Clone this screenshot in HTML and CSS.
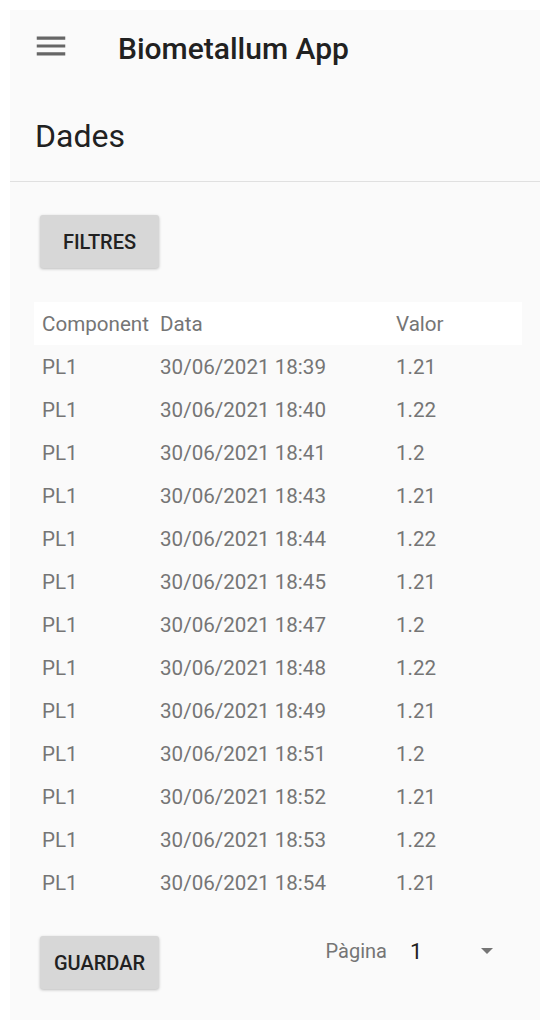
FILE: index.html
```html
<!DOCTYPE html>
<html lang="ca">
<head>
    <meta charset="UTF-8" />
    <meta name="viewport" content="width=device-width, initial-scale=1" />
    <title>Biometallum App</title>
    <link rel="stylesheet" href="styles.css">
</head>
<body>

    <div id="app">
        <header class="app-bar">
            <svg class="menu-icon" viewBox="0 0 24 24" width="38" height="38">
                <path d="M3 18h18v-2H3v2zm0-5h18v-2H3v2zm0-7v2h18V6H3z" fill="#666" />
            </svg>
            <span class="app-title">Biometallum App</span>
        </header>

        <h1 class="page-title">Dades</h1>

        <div class="content">
            <button class="grey-button">FILTRES</button>

            <table id="data-table">
                <thead>
                    <tr>
                        <th>Component</th>
                        <th>Data</th>
                        <th>Valor</th>
                    </tr>
                </thead>
                <tbody>
                    <!-- rows are filled in below -->
                </tbody>
            </table>

            <div class="footer">
                <button class="grey-button">GUARDAR</button>
                <div class="pagination">
                    <span class="page-label">Pàgina</span>
                    <div class="page-select">
                        <span class="page-value">1</span>
                        <span class="arrow"></span>
                    </div>
                </div>
            </div>
        </div>
    </div>

    <script>
        const readings = [
            ['18:39', '1.21'], ['18:40', '1.22'], ['18:41', '1.2'],
            ['18:43', '1.21'], ['18:44', '1.22'], ['18:45', '1.21'],
            ['18:47', '1.2'], ['18:48', '1.22'], ['18:49', '1.21'],
            ['18:51', '1.2'], ['18:52', '1.21'], ['18:53', '1.22'],
            ['18:54', '1.21']
        ];

        const tableBody = document.getElementById('data-table').querySelector('tbody');
        readings.forEach(([time, value]) => {
            const row = tableBody.insertRow();
            row.insertCell().textContent = 'PL1';
            row.insertCell().textContent = `30/06/2021 ${time}`;
            row.insertCell().textContent = value;
        });
    </script>

</body>
</html>
```

FILE: styles.css
```css
body {
    margin: 10px;
    background-color: #fff;
    font-family: Roboto, "Noto Sans", sans-serif;
}
#app {
    box-sizing: border-box;
    height: 1010px;
    background-color: #fafafa;
}
.app-bar {
    display: flex;
    align-items: center;
    height: 78px;
    padding-left: 22px;
}
.menu-icon {
    margin-bottom: 6px;
    margin-right: 48px;
}
.app-title {
    font-size: 30px;
    line-height: 36px;
    font-weight: 500;
    color: #212121;
}
.page-title {
    margin: 0;
    padding: 28px 0 25px 25px;
    font-size: 32px;
    line-height: 40px;
    font-weight: 400;
    color: #212121;
    border-bottom: 1px solid #e0e0e0;
}
.content {
    padding: 33px 18px 0 24px;
}
.grey-button {
    display: block;
    width: 119px;
    height: 53px;
    margin-left: 6px;
    padding: 0;
    border: none;
    border-radius: 3px;
    background-color: #d7d7d7;
    box-shadow: 0 1px 3px rgba(0,0,0,0.25);
    font-family: inherit;
    font-size: 20px;
    font-weight: 500;
    color: #212121;
}
table {
    width: 100%;
    border-collapse: collapse;
    margin-top: 34px;
}
th, td {
    height: 43px;
    padding: 0 0 0 8px;
    text-align: left;
    font-size: 20.6px;
    font-weight: 400;
    color: #757575;
}
thead tr {
    background-color: #fff;
}
th:first-child {
    width: 110px;
}
th:nth-child(2) {
    width: 228px;
}
.footer {
    display: flex;
    justify-content: space-between;
    align-items: flex-start;
    margin-top: 32px;
}
.pagination {
    display: flex;
    align-items: center;
    margin-right: 29px;
    height: 30px;
}
.page-label {
    font-size: 20px;
    color: #757575;
}
.page-select {
    display: flex;
    align-items: center;
    justify-content: space-between;
    width: 83px;
    margin-left: 23px;
}
.page-value {
    font-size: 22px;
    color: #212121;
}
.arrow {
    width: 0;
    height: 0;
    border-left: 6.5px solid transparent;
    border-right: 6.5px solid transparent;
    border-top: 6px solid #757575;
}
```
